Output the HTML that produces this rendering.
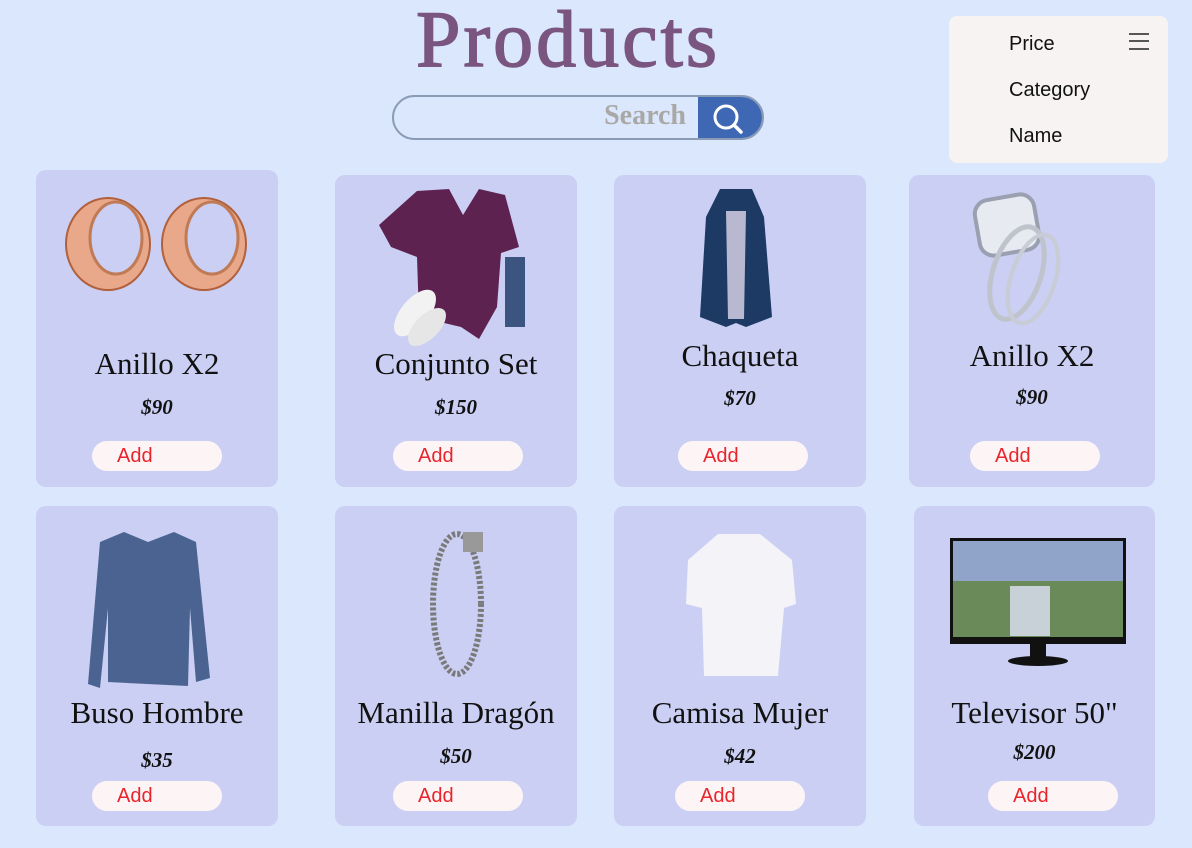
<!DOCTYPE html>
<html><head><meta charset="utf-8"><style>
*{margin:0;padding:0;box-sizing:border-box}
body{width:1192px;height:848px;background:#dae7fd;position:relative;overflow:hidden;font-family:"Liberation Sans",sans-serif}
.abs{position:absolute}
h1{position:absolute;left:388px;top:0px;width:360px;line-height:80px;text-align:center;font-family:"Liberation Serif",serif;font-weight:normal;font-size:80px;color:#7a5580;letter-spacing:3px;-webkit-text-stroke:1.5px #7a5580}
.search{left:392px;top:95px;width:372px;height:45px;border:2px solid #8a9bb5;border-radius:23px;overflow:hidden}
.search span{position:absolute;right:76px;top:3px;font-family:"Liberation Serif",serif;font-weight:bold;font-size:28px;color:#aaa8a6}
.search .btn{position:absolute;right:0;top:0;width:64px;height:43px;background:#3f68b4}
.menu{left:949px;top:16px;width:219px;height:147px;background:#f7f3f2;border-radius:8px}
.menu div{position:absolute;left:60px;font-size:20px;color:#111}
.card{position:absolute;background:#cacff3;border-radius:10px}
.name{position:absolute;width:100%;text-align:center;font-family:"Liberation Serif",serif;font-size:31px;color:#111}
.price{position:absolute;width:100%;text-align:center;font-family:"Liberation Serif",serif;font-style:italic;font-weight:bold;font-size:21px;color:#111}
.add{position:absolute;width:130px;height:30px;background:#fdf5f5;border-radius:15px;color:#e8242c;font-size:20px;line-height:31px;padding-left:25px}
svg{position:absolute}
</style></head><body>
<h1>Products</h1>
<div class="abs search"><span>Search</span><div class="btn"><svg width="64" height="43"><circle cx="28" cy="20" r="11" fill="none" stroke="#fff" stroke-width="3"/><line x1="36" y1="28" x2="43" y2="35" stroke="#fff" stroke-width="3.5" stroke-linecap="round"/></svg></div></div>
<div class="abs menu">
<div style="top:17px">Price</div><div style="top:63px">Category</div><div style="top:109px">Name</div>
<svg style="left:179px;top:16px" width="22" height="20"><path d="M1 2H21M1 9H21M1 17H21" stroke="#222" stroke-width="1.5"/></svg>
</div>

<div class="card" style="left:36px;top:170px;width:242px;height:317px">
<svg style="left:22px;top:22px" width="200" height="110"><g fill="#e8a889" stroke="#b0603c" stroke-width="2"><ellipse cx="50" cy="52" rx="42" ry="46"/><ellipse cx="146" cy="52" rx="42" ry="46"/></g><g fill="#cacff3" stroke="#c07a55" stroke-width="3"><ellipse cx="58" cy="46" rx="26" ry="36"/><ellipse cx="154" cy="46" rx="26" ry="36"/></g></svg>
<div class="name" style="top:176px">Anillo X2</div><div class="price" style="top:225px">$90</div><div class="add" style="left:56px;top:271px">Add</div></div>

<div class="card" style="left:335px;top:175px;width:242px;height:312px">
<svg style="left:44px;top:12px" width="160" height="160"><path d="M38 4 L70 2 L84 28 L100 2 L126 8 L140 60 L122 66 L118 120 L100 152 L82 140 L40 130 L38 70 L12 60 L0 38 Z" fill="#5e2250"/><rect x="126" y="70" width="20" height="70" fill="#3c5580"/><ellipse cx="36" cy="126" rx="14" ry="28" fill="#f2f2f2" transform="rotate(40 36 126)"/><ellipse cx="48" cy="140" rx="12" ry="24" fill="#e6e6e6" transform="rotate(45 48 140)"/></svg>
<div class="name" style="top:171px">Conjunto Set</div><div class="price" style="top:220px">$150</div><div class="add" style="left:58px;top:266px">Add</div></div>

<div class="card" style="left:614px;top:175px;width:252px;height:312px">
<svg style="left:80px;top:12px" width="84" height="142"><path d="M26 2 L58 2 L70 30 L78 130 L52 140 L42 136 L32 140 L6 130 L12 30 Z" fill="#1c3a64"/><path d="M32 24 L52 24 L50 132 L34 132 Z" fill="#b8b8d0"/></svg>
<div class="name" style="top:163px">Chaqueta</div><div class="price" style="top:211px">$70</div><div class="add" style="left:64px;top:266px">Add</div></div>

<div class="card" style="left:909px;top:175px;width:246px;height:312px">
<svg style="left:58px;top:8px" width="110" height="142"><rect x="10" y="14" width="60" height="56" rx="14" fill="#e8eaf2" stroke="#9aa0b0" stroke-width="4" transform="rotate(-10 40 42)"/><ellipse cx="50" cy="90" rx="24" ry="48" fill="none" stroke="#bfc3cc" stroke-width="5" transform="rotate(18 50 90)"/><ellipse cx="66" cy="96" rx="22" ry="46" fill="none" stroke="#c8ccd4" stroke-width="4" transform="rotate(18 66 96)"/></svg>
<div class="name" style="top:163px">Anillo X2</div><div class="price" style="top:210px">$90</div><div class="add" style="left:61px;top:266px">Add</div></div>

<div class="card" style="left:36px;top:506px;width:242px;height:320px">
<svg style="left:50px;top:22px" width="130" height="164"><path d="M38 4 L62 14 L88 4 L110 14 L124 150 L110 154 L104 80 L102 158 L22 154 L22 80 L14 160 L2 156 L14 14 Z" fill="#4a6390"/></svg>
<div class="name" style="top:189px">Buso Hombre</div><div class="price" style="top:242px">$35</div><div class="add" style="left:56px;top:275px">Add</div></div>

<div class="card" style="left:335px;top:506px;width:242px;height:320px">
<svg style="left:82px;top:24px" width="90" height="150"><ellipse cx="40" cy="74" rx="24" ry="70" fill="none" stroke="#7a7a7a" stroke-width="6" stroke-dasharray="3 2"/><rect x="46" y="2" width="20" height="20" fill="#999"/></svg>
<div class="name" style="top:189px">Manilla Dragón</div><div class="price" style="top:238px">$50</div><div class="add" style="left:58px;top:275px">Add</div></div>

<div class="card" style="left:614px;top:506px;width:252px;height:320px">
<svg style="left:66px;top:24px" width="120" height="150"><path d="M38 4 L80 4 L112 30 L116 74 L104 78 L98 146 L24 146 L22 78 L6 74 L8 30 Z" fill="#f4f4f8"/></svg>
<div class="name" style="top:189px">Camisa Mujer</div><div class="price" style="top:238px">$42</div><div class="add" style="left:61px;top:275px">Add</div></div>

<div class="card" style="left:914px;top:506px;width:241px;height:320px">
<svg style="left:36px;top:30px" width="176" height="134"><rect x="0" y="2" width="176" height="106" fill="#111"/><rect x="3" y="5" width="170" height="96" fill="#6a8a5a"/><rect x="3" y="5" width="170" height="40" fill="#8fa4c8"/><rect x="60" y="50" width="40" height="50" fill="#c8d0d8"/><rect x="80" y="108" width="16" height="14" fill="#111"/><ellipse cx="88" cy="125" rx="30" ry="5" fill="#111"/></svg>
<div class="name" style="top:189px">Televisor 50"</div><div class="price" style="top:234px">$200</div><div class="add" style="left:74px;top:275px">Add</div></div>
</body></html>
